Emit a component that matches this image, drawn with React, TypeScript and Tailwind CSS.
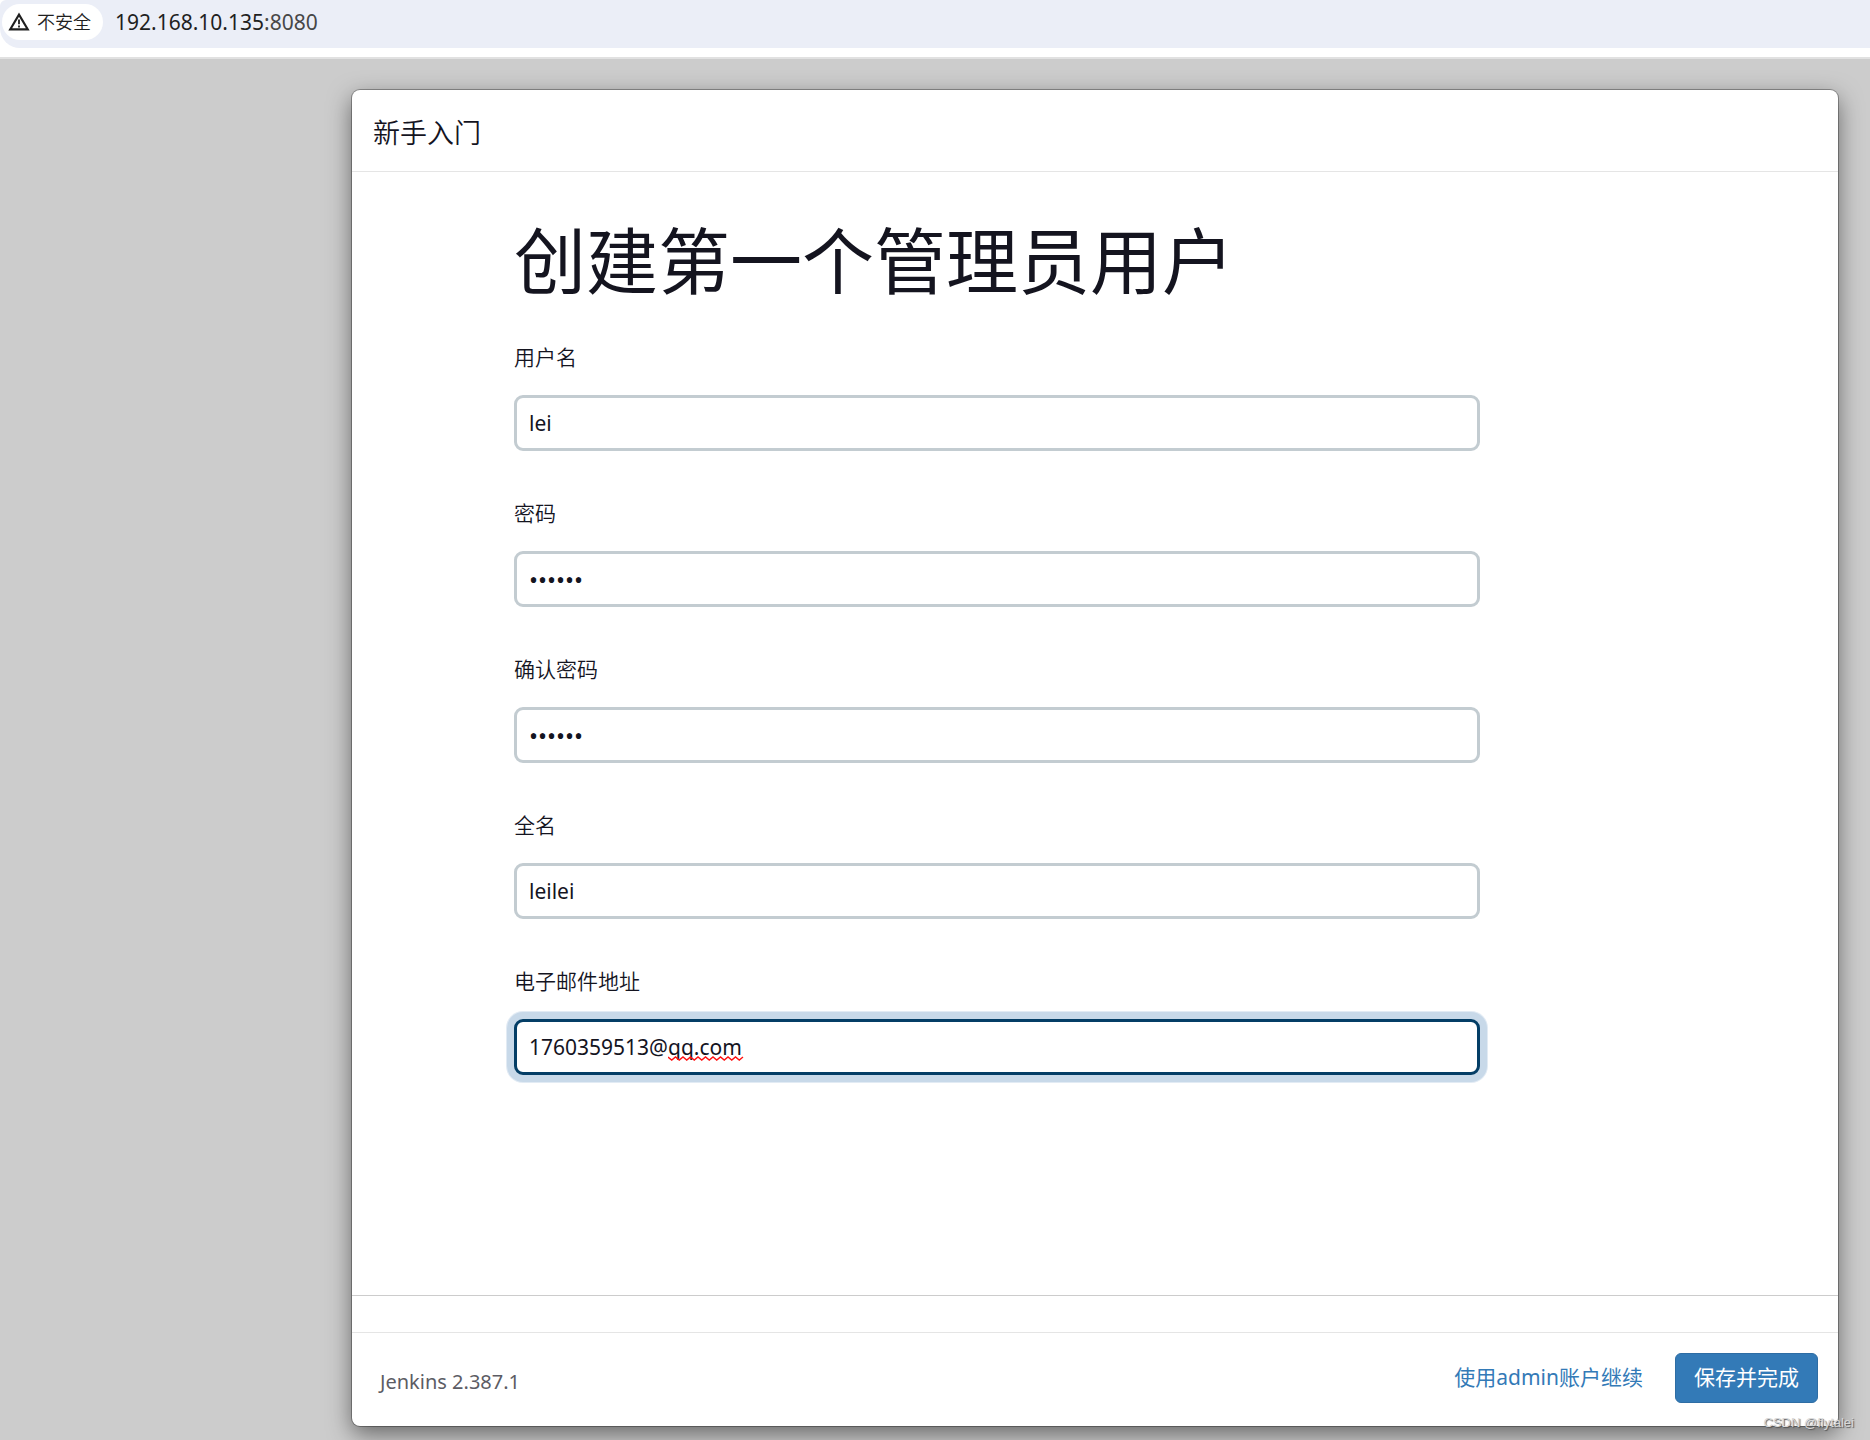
import { useState } from 'react';

type FieldProps = {
  id: string;
  label: string;
  type?: string;
  initial: string;
  focused?: boolean;
};

function WarningIcon() {
  return (
    <svg width="22" height="20" viewBox="0 0 22 20" fill="none" aria-hidden="true">
      <path d="M11 2.6 L19.8 17.4 H2.2 Z" stroke="#1f1f1f" strokeWidth="2.1" strokeLinejoin="miter" />
      <path d="M11 7.6v4.6M11 13.4v2" stroke="#1f1f1f" strokeWidth="1.8" />
    </svg>
  );
}

function SpellingMark() {
  return (
    <svg
      className="pointer-events-none absolute bottom-3.5 left-[154px]"
      width="76"
      height="5"
      viewBox="0 0 76 5"
      fill="none"
      aria-hidden="true"
    >
      <path
        d="M0 1 L3.75 4 L7.5 1 L11.25 4 L15 1 L18.75 4 L22.5 1 L26.25 4 L30 1 L33.75 4 L37.5 1 L41.25 4 L45 1 L48.75 4 L52.5 1 L56.25 4 L60 1 L63.75 4 L67.5 1 L71.25 4 L75 1"
        stroke="#ff1010"
        strokeWidth="1.4"
      />
    </svg>
  );
}

function Field({ id, label, type = 'text', initial, focused = false }: FieldProps) {
  const [value, setValue] = useState(initial);
  const look = focused
    ? 'border-[#043e66] shadow-[0_0_0_7px_#c8d9e9,0_0_0_8px_#e2ebf4]'
    : 'border-[#c3ccd1]';
  const size = type === 'password' ? 'text-[24px]' : 'text-[21px]';
  return (
    <div>
      <label htmlFor={id} className="block text-[21px] leading-8 font-[350]">
        {label}
      </label>
      <div className="relative mt-[22px]">
        <input
          id={id}
          type={type}
          value={value}
          autoComplete="off"
          spellCheck={false}
          onChange={(e) => setValue(e.target.value)}
          className={`block h-14 w-full rounded-[9px] border-3 bg-white px-3 outline-none ${size} ${look}`}
        />
        {focused && <SpellingMark />}
      </div>
    </div>
  );
}

export default function App() {
  return (
    <div className="relative flex min-h-screen flex-col bg-[#cccccc] font-['Noto_Sans','Noto_Sans_CJK_SC',sans-serif] text-[#14141f]">
      <header className="border-b-2 border-[#e1e1e1] bg-white pb-[9px]">
        <div className="flex h-12 items-center rounded-tl-md rounded-bl-[20px] bg-[#ebeef7] pb-1 pl-0.5">
          <button type="button" className="flex h-9 items-center gap-[7px] rounded-full bg-white pr-3 pl-1.5 text-[18px] text-[#1f1f1f]">
            <WarningIcon />
            <span className="font-[350]">不安全</span>
          </button>
          <p className="ml-3 text-[21px] leading-8 text-[#1f1f1f]">
            192.168.10.135<span className="text-[#474747]">:8080</span>
          </p>
        </div>
      </header>

      <main className="mt-[31px] mr-8 mb-3.5 ml-[352px] flex flex-1 flex-col rounded-lg bg-white shadow-[0_0_0_1px_rgba(0,0,0,0.3),0_8px_23px_rgba(0,0,0,0.5)]">
        <div className="flex h-[82px] items-center border-b border-[#e5e5e5] px-[21px] pt-1">
          <h2 className="text-[27px] leading-10 font-[350]">新手入门</h2>
        </div>

        <form id="first-user" className="flex-1 border-b border-[#cccccc] px-[162px] pt-10">
          <h1 className="text-[72px] leading-[96px]">创建第一个管理员用户</h1>
          <div className="mt-[33px] flex max-w-[966px] flex-col gap-[46px]">
            <Field id="username" label="用户名" initial="lei" />
            <Field id="password" label="密码" type="password" initial="123456" />
            <Field id="confirm" label="确认密码" type="password" initial="123456" />
            <Field id="fullname" label="全名" initial="leilei" />
            <Field id="email" label="电子邮件地址" initial="1760359513@qq.com" focused />
          </div>
        </form>

        <footer className="mt-9 flex h-[94px] items-center justify-between border-t border-[#e5e5e5] pr-5 pb-1 pl-7">
          <p className="pt-2 text-[20px] text-[#5c5c64]">Jenkins 2.387.1</p>
          <div className="flex items-center gap-8">
            <a href="#admin" className="text-[21px] text-[#337ab7]">
              使用admin账户继续
            </a>
            <button
              type="submit"
              form="first-user"
              className="h-[50px] rounded-md border border-[#2e6da4] bg-[#337ab7] px-[18px] text-[21px] text-white"
            >
              保存并完成
            </button>
          </div>
        </footer>
      </main>

      <p className="absolute right-4 bottom-[9px] font-['Liberation_Sans',sans-serif] text-[13px] leading-4 text-[#d8d8d8] [text-shadow:1px_1px_1px_#555]">
        CSDN @flytalei
      </p>
    </div>
  );
}
